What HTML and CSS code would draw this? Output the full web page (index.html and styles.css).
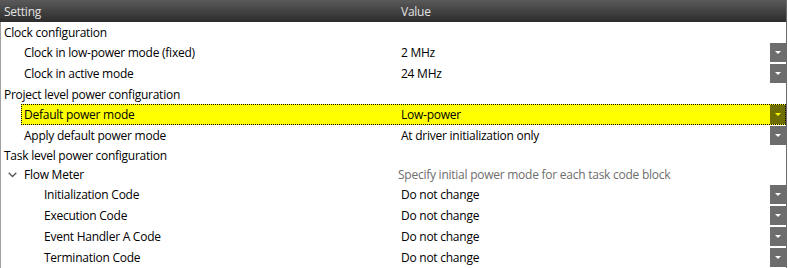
FILE: index.html
```html
<!DOCTYPE html>
<html lang="en">
<head>
  <meta charset="UTF-8" />
  <title>Power settings</title>
  <link rel="stylesheet" href="styles.css">
</head>
<body>
  <div class="table">
    <div class="head">
      <div class="head-name">Setting</div>
      <div class="head-value">Value</div>
    </div>

    <div class="body">
      <div class="row group lvl0">
        <div class="line"><span class="name">Clock configuration</span></div>
      </div>
      <div class="row lvl1">
        <div class="line"><span class="name">Clock in low-power mode (fixed)</span><span class="value">2 MHz</span><span class="drop"></span></div>
      </div>
      <div class="row lvl1">
        <div class="line"><span class="name">Clock in active mode</span><span class="value">24 MHz</span><span class="drop"></span></div>
      </div>

      <div class="row group lvl0">
        <div class="line"><span class="name">Project level power configuration</span></div>
      </div>
      <div class="row lvl1 selected">
        <div class="line"><span class="name">Default power mode</span><span class="value">Low-power</span><span class="drop"></span></div>
      </div>
      <div class="row lvl1">
        <div class="line"><span class="name">Apply default power mode</span><span class="value">At driver initialization only</span><span class="drop"></span></div>
      </div>

      <div class="row group short lvl0">
        <div class="line"><span class="name">Task level power configuration</span></div>
      </div>
      <div class="row group short toggle-row">
        <span class="toggle">
          <svg width="9" height="6" viewBox="0 0 9 6"><path d="M0.7 0.7 L4.5 4.5 L8.3 0.7" fill="none" stroke="#555" stroke-width="1.3"/></svg>
        </span>
        <div class="line"><span class="name">Flow Meter</span><span class="value note">Specify initial power mode for each task code block</span></div>
      </div>
      <div class="row lvl2">
        <div class="line"><span class="name">Initialization Code</span><span class="value">Do not change</span><span class="drop"></span></div>
      </div>
      <div class="row lvl2">
        <div class="line"><span class="name">Execution Code</span><span class="value">Do not change</span><span class="drop"></span></div>
      </div>
      <div class="row lvl2">
        <div class="line"><span class="name">Event Handler A Code</span><span class="value">Do not change</span><span class="drop"></span></div>
      </div>
      <div class="row lvl2">
        <div class="line"><span class="name">Termination Code</span><span class="value">Do not change</span><span class="drop"></span></div>
      </div>
    </div>
  </div>
</body>
</html>
```

FILE: styles.css
```css
body {
  margin: 0;
  padding: 0;
  background: #ffffff;
  font-family: "Open Sans", "Noto Sans", sans-serif;
  font-size: 12px;
  letter-spacing: -0.25px;
  color: #000;
}

.table {
  width: 787px;
  height: 268px;
  box-sizing: border-box;
  border-right: 1px solid #6a6a6a;
  overflow: hidden;
}

.head {
  display: flex;
  align-items: center;
  height: 22px;
  background: linear-gradient(#5a5a5a, #2c2c2c);
  color: #e2e2e2;
}

.head-name {
  width: 397px;
  padding-left: 4px;
  box-sizing: border-box;
}

.head-value {
  padding-left: 4px;
}

.body {
  border-left: 1px solid #a0a0a0;
  height: 246px;
}

.row {
  display: flex;
  height: 21px;
}

.row.group {
  height: 20px;
}

.row.group.short {
  height: 19px;
}

.lvl1 {
  padding-left: 20px;
}

.lvl2 {
  padding-left: 40px;
}

.line {
  flex: 1;
  display: flex;
  align-items: center;
  box-sizing: border-box;
}

.name {
  padding-left: 3px;
  box-sizing: border-box;
  white-space: nowrap;
}

.lvl0 .name {
  width: 396px;
}

.lvl1 .name,
.toggle-row .name {
  width: 376px;
}

.lvl2 .name {
  width: 356px;
}

.value {
  flex: 1;
  padding-left: 4px;
  white-space: nowrap;
}

.value.note {
  padding-left: 1px;
  color: #6d6d6d;
}

.toggle {
  width: 20px;
  display: flex;
  align-items: center;
  justify-content: center;
  padding-left: 2px;
  box-sizing: border-box;
}

.drop {
  align-self: flex-start;
  margin-top: 1px;
  width: 16px;
  height: 19px;
  background: #6d6d6d;
  display: flex;
  align-items: center;
  justify-content: center;
}

.drop::after {
  content: "";
  border-left: 3px solid transparent;
  border-right: 3px solid transparent;
  border-top: 3px solid #ffffff;
}

.selected .line {
  background: #ffff00;
  outline: 1px dotted #000;
  outline-offset: -1px;
}

.selected .drop {
  background: #6d6d00;
}

.selected .drop::after {
  border-top-color: #ffff00;
}
```
